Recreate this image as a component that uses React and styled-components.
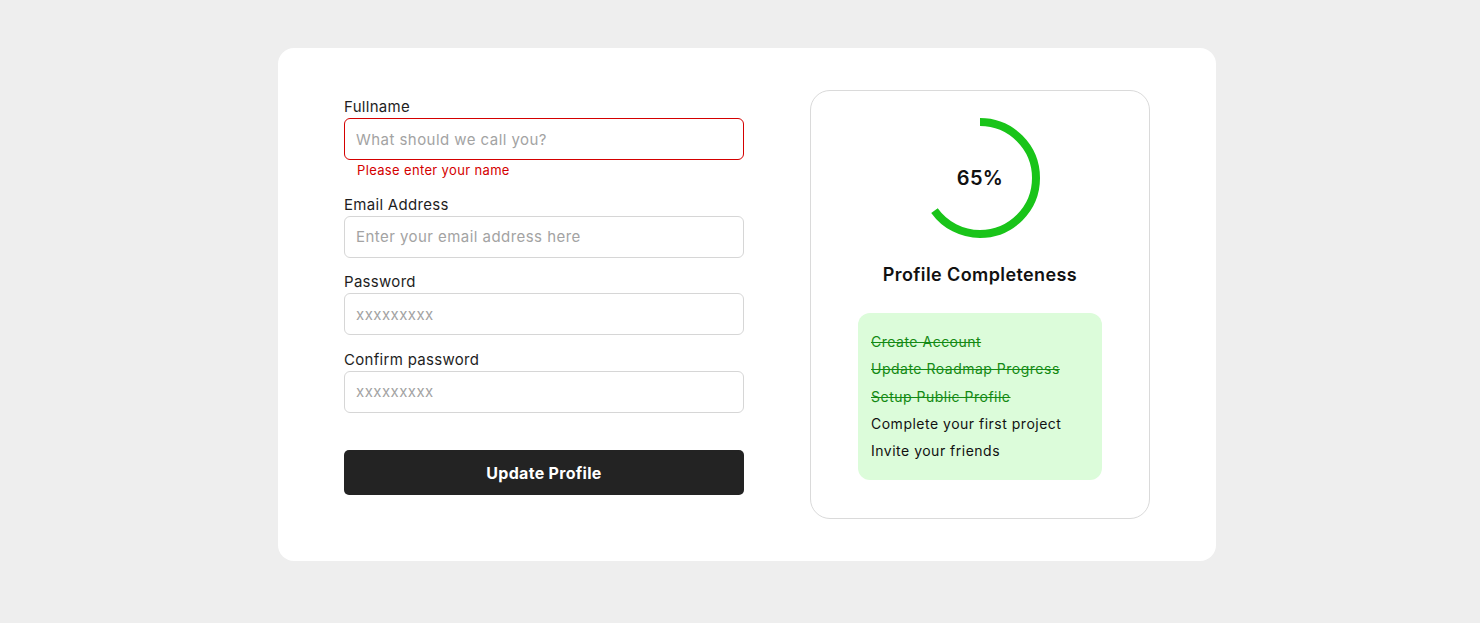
import styled, { createGlobalStyle } from "styled-components";

const GlobalStyle = createGlobalStyle`
  * {
    box-sizing: border-box;
  }

  body {
    margin: 0;
    background: #eeeeee;
    font-family: Inter, "Liberation Sans", sans-serif;
    color: #222;
  }
`;

/* PAGE */
const Page = styled.div`
  min-height: 623px;
  display: flex;
  justify-content: center;
  align-items: flex-start;
  padding: 48px 0 0 14px;
`;

const Card = styled.div`
  width: 938px;
  background: #fff;
  border-radius: 16px;
  padding: 42px 66px;
  display: flex;
  align-items: flex-start;
  gap: 66px;
`;

/* FORM */
const Form = styled.form`
  width: 400px;
  margin-top: 5px;
  display: flex;
  flex-direction: column;
`;

const Field = styled.div`
  display: flex;
  flex-direction: column;
  margin-bottom: 12.5px;
`;

const Label = styled.label`
  font-size: 15px;
  line-height: 22px;
  letter-spacing: 0.3px;
  color: #1e1e1e;
  padding-top: 1px;
`;

const Input = styled.input`
  height: 42px;
  width: 100%;
  border: 1px solid ${(p) => (p.$error ? "#d40000" : "#d6d6d6")};
  border-radius: 6px;
  padding: 0 11px;
  font-family: inherit;
  font-size: 15px;
  letter-spacing: 0.45px;
  color: #222;
  outline: none;

  &::placeholder {
    color: #a3a3a3;
  }
`;

const ErrorText = styled.span`
  font-size: 13px;
  line-height: 18px;
  letter-spacing: 0.35px;
  color: #d40000;
  margin: 1px 0 1px 13px;
`;

const SubmitButton = styled.button`
  margin-top: 25px;
  height: 45px;
  width: 100%;
  border: none;
  border-radius: 5px;
  background: #232323;
  color: #fff;
  font-family: inherit;
  font-size: 16px;
  font-weight: 700;
  letter-spacing: 0.3px;
  cursor: pointer;
`;

/* PROGRESS PANEL */
const Panel = styled.div`
  width: 340px;
  height: 429px;
  border: 1px solid #dadada;
  border-radius: 20px;
  padding-top: 27px;
  display: flex;
  flex-direction: column;
  align-items: center;
`;

const Ring = styled.div`
  position: relative;
  width: 120px;
  height: 120px;
`;

const Percent = styled.span`
  position: absolute;
  inset: 0;
  display: flex;
  align-items: center;
  justify-content: center;
  font-size: 20px;
  font-weight: 600;
  letter-spacing: 0.3px;
  color: #111;
`;

const Title = styled.h3`
  margin: 24px 0 25px;
  font-size: 18px;
  line-height: 26px;
  font-weight: 600;
  letter-spacing: 0.4px;
  color: #111;
`;

const Checklist = styled.ul`
  list-style: none;
  margin: 0;
  width: 244px;
  padding: 15px 13px 16px;
  background: #dcfcda;
  border-radius: 12px;
`;

const Item = styled.li`
  font-size: 14px;
  line-height: 27.25px;
  letter-spacing: 0.5px;
  color: ${(p) => (p.$done ? "#148a14" : "#111")};
  text-decoration: ${(p) => (p.$done ? "line-through" : "none")};
`;

const tasks = [
  { label: "Create Account", done: true },
  { label: "Update Roadmap Progress", done: true },
  { label: "Setup Public Profile", done: true },
  { label: "Complete your first project", done: false },
  { label: "Invite your friends", done: false },
];

function ProgressRing({ value }) {
  const r = 56;
  const c = 2 * Math.PI * r;
  return (
    <Ring>
      <svg width="120" height="120" viewBox="0 0 120 120">
        <circle
          cx="60"
          cy="60"
          r={r}
          fill="none"
          stroke="#19c419"
          strokeWidth="8"
          strokeDasharray={`${(c * value) / 100} ${c}`}
          transform="rotate(-90 60 60)"
        />
      </svg>
      <Percent>{value}%</Percent>
    </Ring>
  );
}

export default function App() {
  return (
    <>
      <GlobalStyle />
      <Page>
        <Card>
          <Form onSubmit={(e) => e.preventDefault()}>
            <Field>
              <Label>Fullname</Label>
              <Input $error placeholder="What should we call you?" />
              <ErrorText>Please enter your name</ErrorText>
            </Field>
            <Field>
              <Label>Email Address</Label>
              <Input placeholder="Enter your email address here" />
            </Field>
            <Field>
              <Label>Password</Label>
              <Input type="password" placeholder="xxxxxxxxx" />
            </Field>
            <Field>
              <Label>Confirm password</Label>
              <Input type="password" placeholder="xxxxxxxxx" />
            </Field>
            <SubmitButton type="submit">Update Profile</SubmitButton>
          </Form>

          <Panel>
            <ProgressRing value={65} />
            <Title>Profile Completeness</Title>
            <Checklist>
              {tasks.map((t) => (
                <Item key={t.label} $done={t.done}>
                  {t.label}
                </Item>
              ))}
            </Checklist>
          </Panel>
        </Card>
      </Page>
    </>
  );
}
